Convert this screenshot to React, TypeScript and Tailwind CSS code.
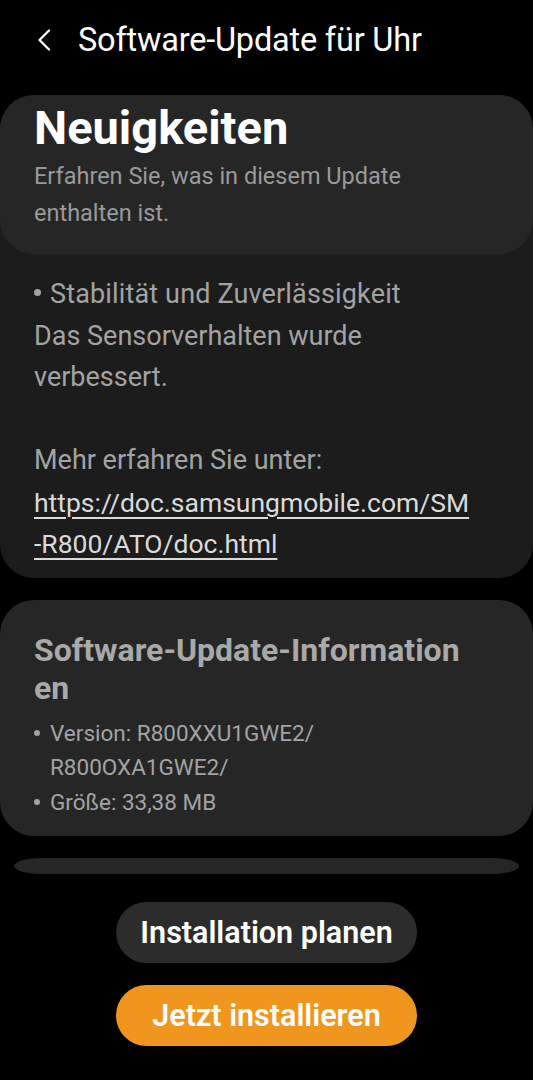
import React from "react";

function Dot() {
  return <span className="inline-block w-[7px] h-[7px] rounded-full bg-current align-middle mr-[9px] relative top-[-2px]" />;
}

export default function App() {
  const font = { fontFamily: '"Roboto", "Noto Sans", sans-serif' };
  return (
    <div className="w-[533px] h-[1080px] bg-black overflow-hidden flex flex-col" style={font}>
      {/* Header */}
      <div className="h-[95px] flex items-start pt-[20px]">
        <div className="w-[78px] h-[40px] flex items-center pl-[37px]">
          <svg width="14" height="22" viewBox="0 0 14 22" fill="none">
            <path d="M12 1.5 L2.5 11 L12 20.5" stroke="white" strokeWidth="2.2" strokeLinecap="round" strokeLinejoin="round" />
          </svg>
        </div>
        <div className="text-white text-[32.5px] leading-[40px] tracking-[-0.2px]">Software-Update für Uhr</div>
      </div>

      {/* Card 1 */}
      <div className="bg-[#1c1c1c] rounded-[34px] flex flex-col">
        <div className="bg-[#262626] rounded-[34px] px-[34px] pt-[4px] pb-[22px]">
          <div className="text-white font-bold text-[47px] leading-[58px]">Neuigkeiten</div>
          <div className="text-[#9a9a9a] text-[23.5px] leading-[37px] pt-[1px]">
            Erfahren Sie, was in diesem Update
            <br />
            enthalten ist.
          </div>
        </div>
        <div className="px-[34px] pt-[20px] pb-[14px] text-[#a3a3a3] text-[27px] leading-[41.5px]">
          <div className="flex items-center">
            <Dot />
            <span className="tracking-[0.15px]">Stabilität und Zuverlässigkeit</span>
          </div>
          <div>Das Sensorverhalten wurde</div>
          <div>verbessert.</div>
          <div>&nbsp;</div>
          <div>Mehr erfahren Sie unter:</div>
          <div className="text-[#dadada] text-[26.5px] leading-[41px] underline underline-offset-[5px] decoration-[1.5px]">
            https://doc.samsungmobile.com/SM
            <br />
            -R800/ATO/doc.html
          </div>
        </div>
      </div>

      {/* Card 2 */}
      <div className="mt-[22px] bg-[#262626] rounded-[34px] px-[34px] pt-[31px] pb-[17px]">
        <div className="text-[#a9a9a9] font-bold text-[32px] leading-[38px]">
          Software-Update-Information
          <br />
          en
        </div>
        <div className="mt-[9px] text-[#a3a3a3] text-[22.5px] leading-[34.5px]">
          <div className="flex">
            <span className="w-[16px] shrink-0 h-[34.5px] flex items-center">
              <span className="w-[6px] h-[6px] rounded-full bg-current" />
            </span>
            <span>
              Version: R800XXU1GWE2/
              <br />
              R800OXA1GWE2/
            </span>
          </div>
          <div className="flex">
            <span className="w-[16px] shrink-0 h-[34.5px] flex items-center">
              <span className="w-[6px] h-[6px] rounded-full bg-current" />
            </span>
            <span>Größe: 33,38 MB</span>
          </div>
        </div>
      </div>

      {/* Card 3 slice */}
      <div className="mt-[22px] mx-[14px] h-[16px] bg-[#262626] rounded-[28px/8px]" />

      {/* Buttons */}
      <div className="mt-[28px] flex flex-col items-center gap-[22px]">
        <div className="w-[301px] h-[61px] rounded-full bg-[#2c2c2c] flex items-center justify-center text-white font-semibold text-[30.5px]">
          Installation planen
        </div>
        <div className="w-[301px] h-[61px] rounded-full bg-[#f0961e] flex items-center justify-center text-white font-semibold text-[30.5px]">
          Jetzt installieren
        </div>
      </div>
    </div>
  );
}
